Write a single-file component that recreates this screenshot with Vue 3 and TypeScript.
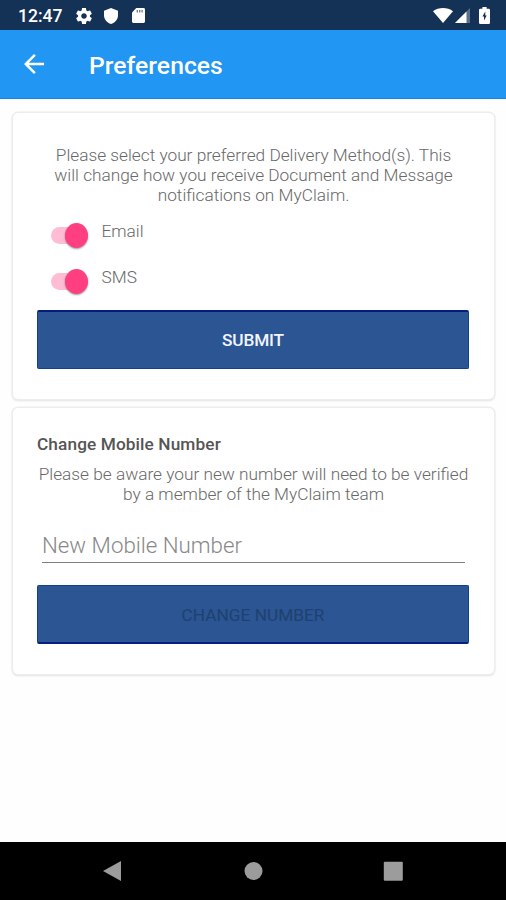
<script setup lang="ts">
import { reactive, ref } from 'vue'

interface DeliveryMethod {
  label: string
  enabled: boolean
}

const methods = reactive<DeliveryMethod[]>([
  { label: 'Email', enabled: true },
  { label: 'SMS', enabled: true },
])

const mobileNumber = ref('')
</script>

<template>
  <div class="screen">
    <header class="status-bar">
      <span class="clock">12:47</span>
      <svg class="gear" viewBox="2 2 20 20" aria-hidden="true">
        <path d="M19.43 12.98c.04-.32.07-.64.07-.98s-.03-.66-.07-.98l2.11-1.65c.19-.15.24-.42.12-.64l-2-3.46c-.12-.22-.39-.3-.61-.22l-2.49 1c-.52-.4-1.08-.73-1.69-.98l-.38-2.65C14.46 2.18 14.25 2 14 2h-4c-.25 0-.46.18-.49.42l-.38 2.65c-.61.25-1.17.59-1.69.98l-2.49-1c-.23-.09-.49 0-.61.22l-2 3.46c-.13.22-.07.49.12.64l2.11 1.65c-.04.32-.07.65-.07.98s.03.66.07.98l-2.11 1.65c-.19.15-.24.42-.12.64l2 3.46c.12.22.39.3.61.22l2.49-1c.52.4 1.08.73 1.69.98l.38 2.65c.03.24.24.42.49.42h4c.25 0 .46-.18.49-.42l.38-2.65c.61-.25 1.17-.59 1.69-.98l2.49 1c.23.09.49 0 .61-.22l2-3.46c.12-.22.07-.49-.12-.64l-2.11-1.65zM12 15.5c-1.93 0-3.5-1.57-3.5-3.5s1.57-3.5 3.5-3.5 3.5 1.57 3.5 3.5-1.57 3.5-3.5 3.5z" />
      </svg>
      <svg class="shield" viewBox="0 0 14 16" aria-hidden="true">
        <path d="M7 0 14 2.7V7.3C14 11.4 11 15 7 16 3 15 0 11.4 0 7.3V2.7Z" />
      </svg>
      <svg class="sd-card" viewBox="0 0 13 15" aria-hidden="true">
        <path d="M4.3 0H11.6Q13 0 13 1.4V13.6Q13 15 11.6 15H1.4Q0 15 0 13.6V4.5Z" />
        <path class="contacts" d="M4.6 2V4.4H6V2ZM7 2V4.4H8.4V2ZM9.4 2V4.4H10.8V2Z" />
      </svg>
      <span class="spacer"></span>
      <svg class="wifi" viewBox="0 0 20 15" aria-hidden="true">
        <path d="M0 3.2C5.5-1 14.5-1 20 3.2L10 15Z" />
      </svg>
      <svg class="signal" viewBox="0 0 15 15" aria-hidden="true">
        <path class="faint" d="M0 15 15 0V15Z" />
        <path d="M0 15 11.5 3.5V15Z" />
      </svg>
      <svg class="battery" viewBox="0 0 11 17" aria-hidden="true">
        <path fill-rule="evenodd" d="M3.4 0H7.6V1.7H9.8Q11 1.7 11 2.9V15.8Q11 17 9.8 17H1.2Q0 17 0 15.8V2.9Q0 1.7 1.2 1.7H3.4ZM6.3 4.6 3.4 9.6H5V13.4L7.7 8.4H6.3Z" />
      </svg>
    </header>

    <div class="app-bar">
      <button class="back" aria-label="Back">
        <svg viewBox="4 4 16 16" aria-hidden="true">
          <path d="M20 11H7.83l5.59-5.59L12 4l-8 8 8 8 1.41-1.41L7.83 13H20v-2z" />
        </svg>
      </button>
      <h1>Preferences</h1>
    </div>

    <main>
      <section class="card delivery">
        <p class="copy">
          Please select your preferred Delivery Method(s). This<br />
          will change how you receive Document and Message<br />
          notifications on MyClaim.
        </p>
        <label v-for="method in methods" :key="method.label" class="method">
          <input v-model="method.enabled" type="checkbox" />
          <span class="track"><span class="thumb"></span></span>
          <span class="method-label">{{ method.label }}</span>
        </label>
        <button class="action submit">SUBMIT</button>
      </section>

      <section class="card mobile">
        <h2>Change Mobile Number</h2>
        <p class="copy">
          Please be aware your new number will need to be verified<br />
          by a member of the MyClaim team
        </p>
        <input v-model="mobileNumber" class="number" type="tel" placeholder="New Mobile Number" />
        <button class="action change" :disabled="!mobileNumber">CHANGE NUMBER</button>
      </section>
    </main>

    <nav class="nav-bar">
      <svg viewBox="0 0 20 20" aria-hidden="true"><path d="M0 10 18 0V20Z" /></svg>
      <svg viewBox="0 0 20 20" aria-hidden="true"><circle cx="10.5" cy="10" r="9" /></svg>
      <svg viewBox="0 0 20 20" aria-hidden="true"><rect x="0.8" y="0.7" width="19" height="19" rx="1" /></svg>
    </nav>
  </div>
</template>

<style>
body {
  margin: 0;
  background: #fefefe;
}
</style>

<style scoped>
.screen {
  display: flex;
  flex-direction: column;
  width: 506px;
  height: 900px;
  overflow: hidden;
  background: #fefefe;
  font-family: Roboto, "Liberation Sans", sans-serif;
}

.screen * {
  box-sizing: border-box;
}

.status-bar {
  display: flex;
  align-items: center;
  flex: none;
  height: 30px;
  padding: 1px 16px 0 18px;
  background: #143256;
  color: #fff;
}

.status-bar svg {
  flex: none;
  fill: #fff;
}

.clock {
  width: 58px;
  font-size: 17.5px;
  font-weight: 500;
  line-height: 30px;
}

.gear {
  width: 16px;
  height: 16px;
}

.shield {
  width: 14px;
  height: 16px;
  margin-left: 12px;
}

.sd-card {
  width: 13px;
  height: 15px;
  margin-left: 14px;
}

.sd-card .contacts {
  fill: #143256;
  fill-opacity: 0.6;
}

.spacer {
  flex: 1;
}

.wifi {
  width: 20px;
  height: 15px;
  margin: 0 2px 1px 0;
}

.signal {
  width: 15px;
  height: 15px;
  margin-right: 9px;
}

.signal .faint {
  fill-opacity: 0.3;
}

.battery {
  width: 11px;
  height: 17px;
}

.app-bar {
  display: flex;
  align-items: center;
  flex: none;
  height: 69px;
  padding-left: 24px;
  border-bottom: 1px solid #1584e6;
  background: #2296f3;
}

.back {
  width: 20px;
  height: 20px;
  padding: 0;
  border: 0;
  background: none;
}

.back svg {
  display: block;
  width: 20px;
  height: 20px;
  fill: #fff;
}

h1 {
  margin: 4px 0 0 45px;
  color: #fff;
  font-size: 24.7px;
  font-weight: 500;
  letter-spacing: 0.04px;
  line-height: 30px;
}

main {
  display: flex;
  flex: 1;
  flex-direction: column;
  gap: 9px;
  padding: 14px 12px 0 13px;
}

.card {
  display: flex;
  flex-direction: column;
  padding: 0 25px 0 24px;
  border-radius: 5px;
  background: #fff;
  box-shadow: 0 0 0 1.5px #ededed, 0 1px 2px 1px #dfdfdf;
}

.delivery {
  height: 286px;
  padding-top: 32px;
}

.mobile {
  height: 266px;
  padding-top: 24px;
}

.copy {
  margin: 0 -1px 0 0;
  color: #686868;
  font-size: 17.25px;
  font-weight: 300;
  line-height: 20px;
  text-align: center;
  white-space: nowrap;
}

.method {
  display: flex;
  align-items: flex-start;
  height: 46px;
  padding-left: 14px;
}

.method input {
  position: absolute;
  opacity: 0;
  pointer-events: none;
}

.track {
  display: flex;
  align-items: center;
  width: 37px;
  height: 17px;
  margin-top: 22px;
  border-radius: 9px;
  background: #ffbdd3;
}

.thumb {
  width: 25px;
  height: 25px;
  border-radius: 50%;
  background: #fafafa;
  box-shadow: 0 1px 2px rgba(0, 0, 0, 0.4);
}

input:checked + .track .thumb {
  margin-left: 14px;
  background: #ff3f80;
}

.method-label {
  margin: 16px 0 0 13.5px;
  color: #686868;
  font-size: 17.25px;
  font-weight: 300;
  line-height: 20px;
}

.action {
  width: 432px;
  height: 59px;
  padding: 0;
  border: 1px solid #11418a;
  border-radius: 2px;
  background: #2b5593;
  font-family: inherit;
  font-size: 17.25px;
  font-weight: 500;
}

.submit {
  margin-top: 13px;
  border-top: 2px solid #041d78;
  color: #f2f5ff;
  letter-spacing: -0.15px;
}

.change {
  margin-top: 22px;
  padding-top: 2px;
  border-bottom: 2px solid #042182;
  color: #20416f;
  font-weight: 400;
}

h2 {
  margin: 0 0 8px;
  color: #555;
  font-size: 17.25px;
  font-weight: 500;
  letter-spacing: 0.1px;
  line-height: 24px;
}

.number {
  width: 423px;
  height: 38px;
  margin: 21px 0 0 5px;
  padding: 3px 0 0;
  border: 0;
  border-bottom: 1.5px solid #808080;
  border-radius: 0;
  outline: none;
  background: none;
  color: #444;
  font-family: inherit;
  font-size: 22.3px;
  font-weight: 300;
}

.number::placeholder {
  color: #888;
  opacity: 1;
}

.nav-bar {
  display: flex;
  align-items: center;
  justify-content: space-between;
  flex: none;
  height: 58px;
  padding: 0 103px;
  background: #000;
}

.nav-bar svg {
  width: 20px;
  height: 20px;
  fill: #9c9c9c;
}
</style>
